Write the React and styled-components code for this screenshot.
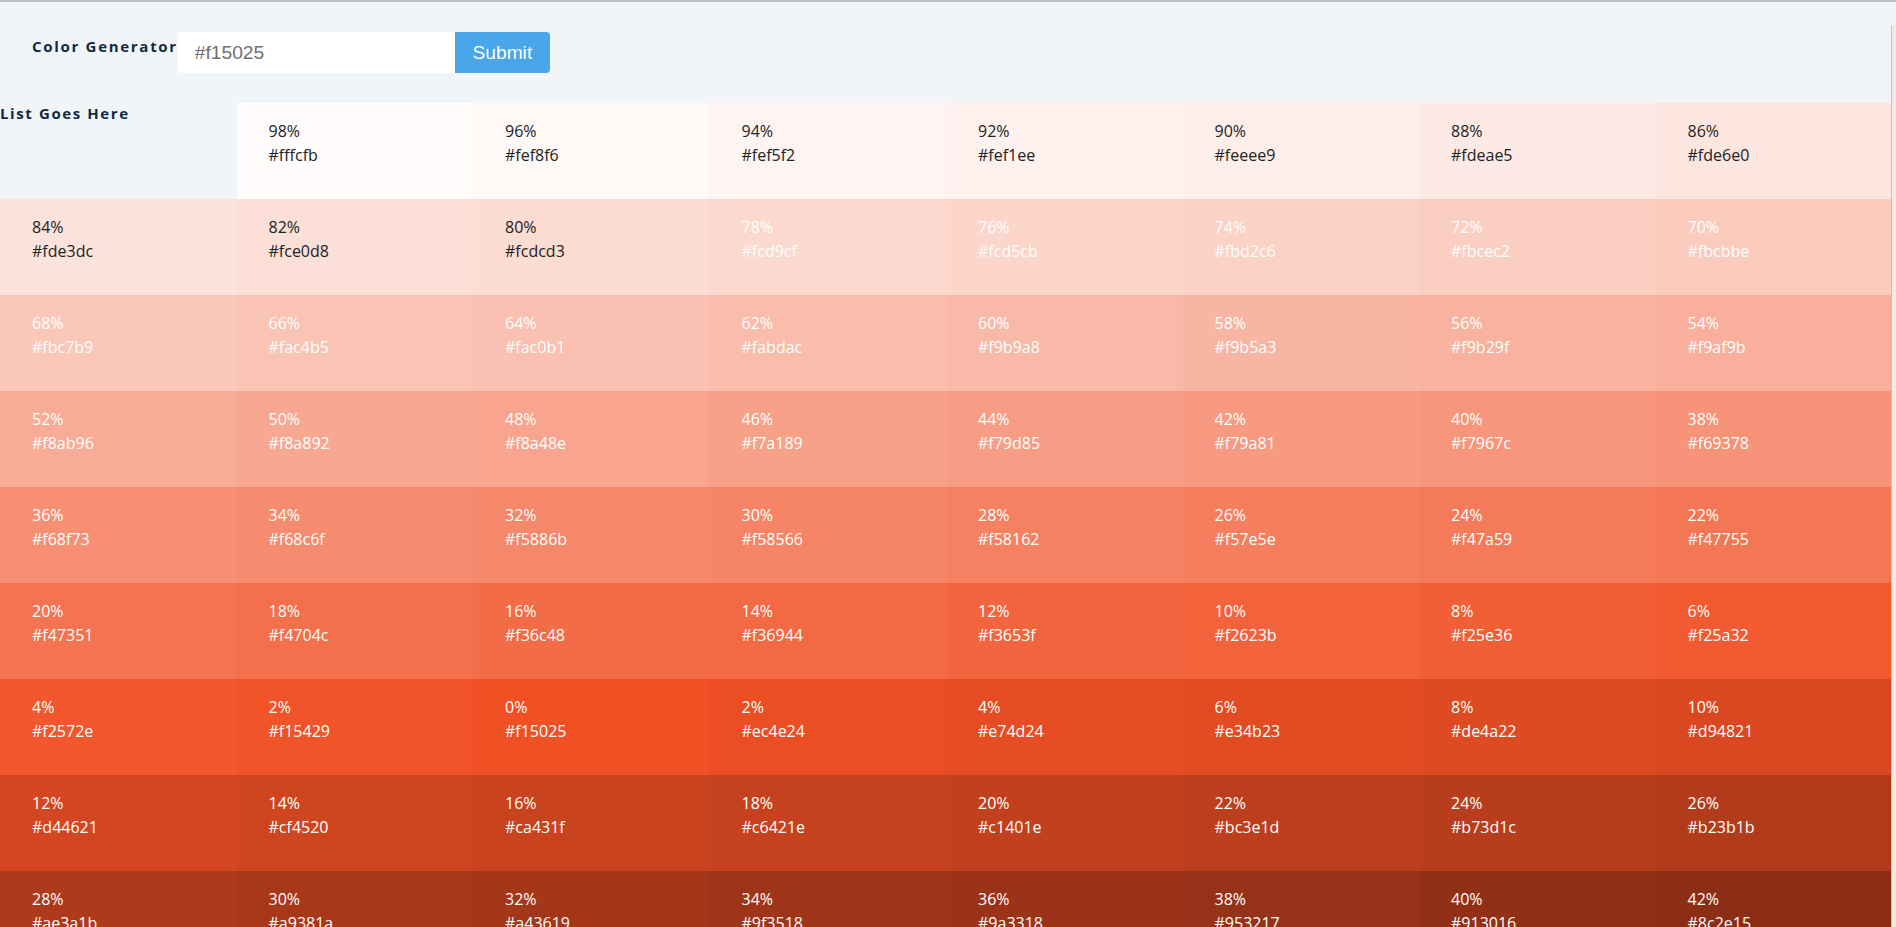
import React, { useState } from "react";
import styled, { createGlobalStyle } from "styled-components";

const GlobalStyle = createGlobalStyle`
	* {
		box-sizing: border-box;
	}
	body {
		margin: 0;
		background: #f1f5f8;
		font-family: "Open Sans", "Liberation Sans", sans-serif;
		color: #102a42;
	}
`;

const toHex = (rgb) =>
	"#" + rgb.map((v) => v.toString(16).padStart(2, "0")).join("");

const parseHex = (hex) => {
	const h = hex.replace("#", "");
	return [0, 2, 4].map((i) => parseInt(h.slice(i, i + 2), 16));
};

// mix the way values.js does it, so the rounding comes out the same
const mix = (rgb1, rgb2, weight) => {
	const p = weight / 100;
	const w = p * 2 - 1;
	const w1 = (w + 1) / 2;
	const w2 = 1 - w1;
	return rgb1.map((c, i) => Math.round(c * w1 + rgb2[i] * w2));
};

const buildList = (hex, step = 2) => {
	const base = parseHex(hex);
	const list = [];
	for (let w = 100 - step; w >= step; w -= step) {
		list.push({ weight: w, hex: toHex(mix([255, 255, 255], base, w)) });
	}
	list.push({ weight: 0, hex: toHex(base) });
	for (let w = step; w <= 100; w += step) {
		list.push({ weight: w, hex: toHex(mix([0, 0, 0], base, w)) });
	}
	return list;
};

const SingleColor = ({ weight, hex, light }) => (
	<ColorCell style={{ backgroundColor: hex }} $light={light}>
		<Percent>{weight}%</Percent>
		<HexValue>{hex}</HexValue>
	</ColorCell>
);

const App = () => {
	const [color, setColor] = useState("");
	const list = buildList("#f15025");

	return (
		<>
			<GlobalStyle />
			<Page>
				<Header>
					<Title>Color Generator</Title>
					<Form onSubmit={(e) => e.preventDefault()}>
						<ColorInput
							type="text"
							value={color}
							placeholder="#f15025"
							onChange={(e) => setColor(e.target.value)}
						/>
						<SubmitButton type="submit">Submit</SubmitButton>
					</Form>
				</Header>
				<Colors>
					<ListLabel>List Goes Here</ListLabel>
					{list.map((c, index) => (
						<SingleColor key={index} {...c} light={index >= 10} />
					))}
				</Colors>
			</Page>
			<ScrollEdge />
		</>
	);
};

export default App;

const Page = styled.main`
	border-top: 2px solid #bcc0c5;
	padding-right: 4px;
`;

const Header = styled.section`
	display: flex;
	align-items: flex-start;
	padding: 30px 32px 30px;
`;

const Title = styled.h3`
	margin: 4px 0 0 0;
	font-size: 15px;
	font-weight: 700;
	letter-spacing: 1.7px;
	line-height: 20px;
	color: #102a42;
`;

const Form = styled.form`
	display: flex;
`;

const ColorInput = styled.input`
	width: 277px;
	height: 41px;
	padding: 0 17px;
	border: none;
	border-radius: 4px 0 0 4px;
	background: #fff;
	font-family: "Liberation Sans", Arial, sans-serif;
	font-size: 19.2px;
	color: #555;
	outline: none;
	&::placeholder {
		color: #6f6f6f;
	}
`;

const SubmitButton = styled.button`
	width: 95px;
	height: 41px;
	border: none;
	border-radius: 0 4px 4px 0;
	background: #49a6e9;
	color: #fff;
	font-family: "Liberation Sans", Arial, sans-serif;
	font-size: 19.2px;
	cursor: pointer;
`;

const Colors = styled.section`
	display: grid;
	grid-template-columns: repeat(8, 1fr);
	grid-auto-rows: 96px;
`;

const ListLabel = styled.h4`
	margin: 0;
	font-size: 15px;
	font-weight: 700;
	letter-spacing: 1.6px;
	line-height: 20px;
	color: #102a42;
`;

const ColorCell = styled.article`
	padding: 16px 32px;
	font-size: 16px;
	line-height: 24px;
	color: ${({ $light }) => ($light ? "#fff" : "#222")};
	cursor: pointer;
`;

const Percent = styled.p`
	margin: 0;
`;

const HexValue = styled.p`
	margin: 0;
`;

const ScrollEdge = styled.div`
	position: fixed;
	top: 25px;
	right: 0;
	bottom: 0;
	width: 5px;
	background: #efece6;
	border-left: 1px solid #c4c4c4;
`;
